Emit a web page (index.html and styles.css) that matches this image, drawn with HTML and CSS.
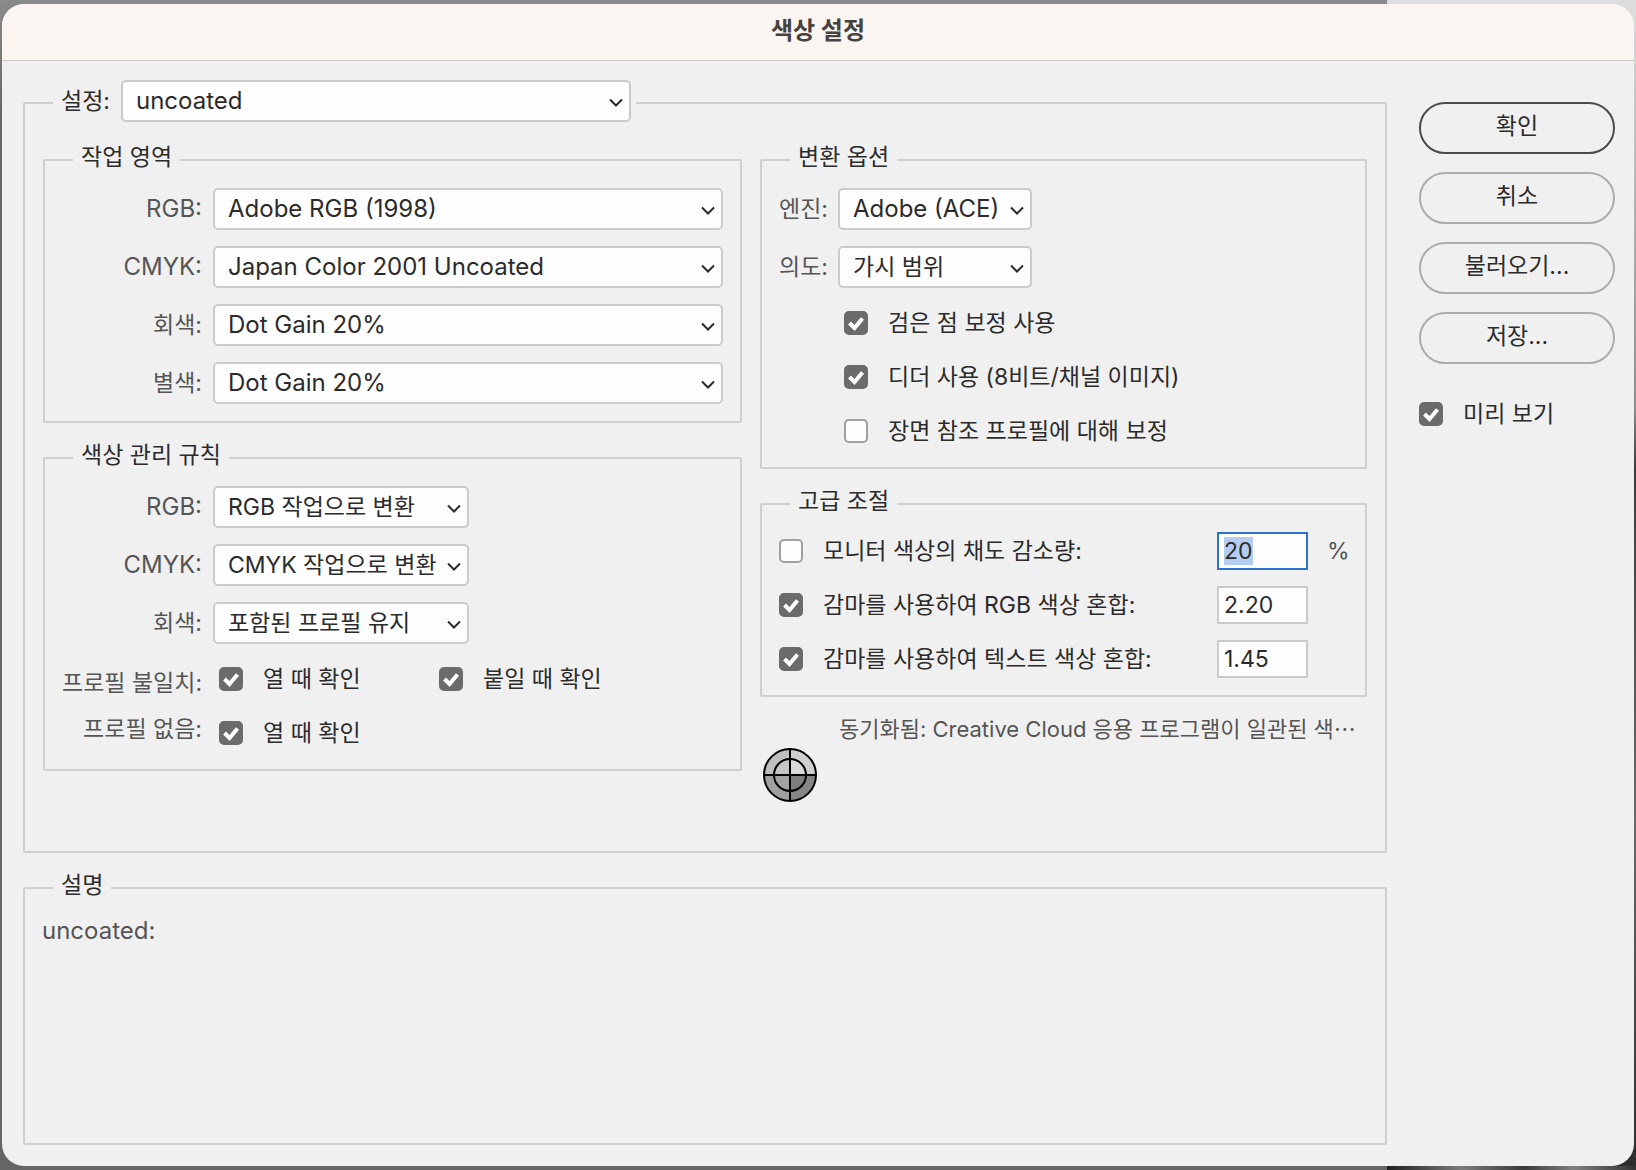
FILE: index.html
```html
<!DOCTYPE html>
<html lang="ko">
<head>
    <meta charset="UTF-8">
    <meta name="viewport" content="width=device-width, initial-scale=1.0">
    <title>색상 설정</title>
    <link rel="stylesheet" href="styles.css">
</head>
<body>

<form class="dialog" id="colorSettings">
    <header class="title-bar">
        <h1>색상 설정</h1>
    </header>

    <div class="content">
        <div class="main">
            <fieldset class="settings">
                <legend class="settings-legend">
                    <label for="preset">설정:</label>
                    <select id="preset" class="latin"><option>uncoated</option></select>
                </legend>

                <div class="columns">
                    <div class="column">
                        <fieldset class="group">
                            <legend>작업 영역</legend>
                            <div class="fields">
                                <label for="spaceRgb" class="latin">RGB:</label>
                                <select id="spaceRgb" class="latin"><option>Adobe RGB (1998)</option></select>
                                <label for="spaceCmyk" class="latin">CMYK:</label>
                                <select id="spaceCmyk" class="latin"><option>Japan Color 2001 Uncoated</option></select>
                                <label for="spaceGray">회색:</label>
                                <select id="spaceGray" class="latin"><option>Dot Gain 20%</option></select>
                                <label for="spaceSpot">별색:</label>
                                <select id="spaceSpot" class="latin"><option>Dot Gain 20%</option></select>
                            </div>
                        </fieldset>

                        <fieldset class="group">
                            <legend>색상 관리 규칙</legend>
                            <div class="fields policies">
                                <label for="policyRgb" class="latin">RGB:</label>
                                <select id="policyRgb"><option>RGB 작업으로 변환</option></select>
                                <label for="policyCmyk" class="latin">CMYK:</label>
                                <select id="policyCmyk"><option>CMYK 작업으로 변환</option></select>
                                <label for="policyGray">회색:</label>
                                <select id="policyGray"><option>포함된 프로필 유지</option></select>
                            </div>
                            <div class="fields profile-checks">
                                <span class="mismatch">프로필 불일치:</span>
                                <div class="check-row">
                                    <label class="check"><input type="checkbox" checked> 열 때 확인</label>
                                    <label class="check"><input type="checkbox" checked> 붙일 때 확인</label>
                                </div>
                                <span class="missing">프로필 없음:</span>
                                <div class="check-row">
                                    <label class="check"><input type="checkbox" checked> 열 때 확인</label>
                                </div>
                            </div>
                        </fieldset>
                    </div>

                    <div class="column">
                        <fieldset class="group">
                            <legend>변환 옵션</legend>
                            <div class="fields conversion">
                                <label for="engine">엔진:</label>
                                <select id="engine" class="latin"><option>Adobe (ACE)</option></select>
                                <label for="intent">의도:</label>
                                <select id="intent"><option>가시 범위</option></select>
                            </div>
                            <div class="check-list">
                                <label class="check"><input type="checkbox" checked> 검은 점 보정 사용</label>
                                <label class="check"><input type="checkbox" checked> 디더 사용 (8비트/채널 이미지)</label>
                                <label class="check"><input type="checkbox"> 장면 참조 프로필에 대해 보정</label>
                            </div>
                        </fieldset>

                        <fieldset class="group">
                            <legend>고급 조절</legend>
                            <div class="advanced">
                                <label class="check"><input type="checkbox"> 모니터 색상의 채도 감소량:</label>
                                <input type="text" id="desaturate" value="20" aria-label="채도 감소량">
                                <span class="unit">%</span>
                                <label class="check"><input type="checkbox" checked> 감마를 사용하여 RGB 색상 혼합:</label>
                                <input type="text" value="2.20" aria-label="RGB 감마">
                                <span></span>
                                <label class="check"><input type="checkbox" checked> 감마를 사용하여 텍스트 색상 혼합:</label>
                                <input type="text" value="1.45" aria-label="텍스트 감마">
                                <span></span>
                            </div>
                        </fieldset>

                        <div class="sync">
                            <svg class="sync-icon" viewBox="0 0 54 54" aria-hidden="true">
                                <path d="M27 27V1A26 26 0 0 0 1 27z" fill="#bfbfbf"/>
                                <path d="M27 27V1A26 26 0 0 1 53 27z" fill="#d0d0d0"/>
                                <path d="M27 27V53A26 26 0 0 1 1 27z" fill="#a0a0a0"/>
                                <path d="M27 27V53A26 26 0 0 0 53 27z" fill="#858585"/>
                                <path d="M27 27V11A16 16 0 0 0 11 27z" fill="#c6c6c6"/>
                                <path d="M27 27V11A16 16 0 0 1 43 27z" fill="#d9d9d9"/>
                                <path d="M27 27V43A16 16 0 0 1 11 27z" fill="#a3a3a3"/>
                                <path d="M27 27V43A16 16 0 0 0 43 27z" fill="#7e7e7e"/>
                                <g fill="none" stroke="#000" stroke-width="2">
                                    <circle cx="27" cy="27" r="26"/>
                                    <circle cx="27" cy="27" r="16"/>
                                    <path d="M27 1v52M1 27h52"/>
                                </g>
                            </svg>
                            <p>동기화됨: Creative Cloud 응용 프로그램이 일관된 색⋯</p>
                        </div>
                    </div>
                </div>
            </fieldset>

            <fieldset class="group description">
                <legend>설명</legend>
                <p class="latin">uncoated:</p>
            </fieldset>
        </div>

        <aside class="actions">
            <button type="submit" class="default">확인</button>
            <button type="button">취소</button>
            <button type="button">불러오기...</button>
            <button type="button">저장...</button>
            <label class="check"><input type="checkbox" checked> 미리 보기</label>
        </aside>
    </div>
</form>

<script>
    const desaturate = document.getElementById('desaturate');
    desaturate.focus();
    desaturate.select();

    document.getElementById('colorSettings').addEventListener('submit', function(event) {
        event.preventDefault();
    });
</script>

</body>
</html>
```

FILE: styles.css
```css
* {
    box-sizing: border-box;
}

body {
    margin: 0;
    padding: 4px 2px;
    min-height: 100vh;
    font-family: Inter, "Noto Sans CJK KR", sans-serif;
    font-size: 23px;
    line-height: 30px;
    color: #2b2b2b;
    background:
        linear-gradient(90deg, #1f1f1f, #7c7c7c 30%, #3a3a3a 55%, #808080 75%, #333) right bottom / 249px 4px no-repeat,
        linear-gradient(#dedede, #8a8a8a 35%, #3c3c3c 40%, #6b6b6b 70%, #2c2c2c) right top / 249px 100% no-repeat,
        linear-gradient(#8a8a8a, #666 10%, #666);
}

h1, p {
    margin: 0;
}

.dialog {
    display: flex;
    flex-direction: column;
    min-height: calc(100vh - 8px);
    border-radius: 22px;
    overflow: hidden;
    background-color: #f0f0f0;
}

.title-bar {
    height: 57px;
    padding-top: 12px;
    text-align: center;
    background-color: #faf5f1;
    border-bottom: 1px solid #cfcccb;
}

.title-bar h1 {
    font-size: 24px;
    line-height: 30px;
    font-weight: 700;
    color: #47423f;
}

.content {
    flex: 1;
    display: flex;
    gap: 32px;
    padding: 19px 19px 21px 21px;
}

.main {
    flex: 1;
    min-width: 0;
    display: flex;
    flex-direction: column;
    gap: 17px;
}

/* Groups */
fieldset {
    min-width: 0;
    margin: 0;
    border: 2px solid #cfcfcf;
    border-radius: 2px;
}

legend {
    padding: 0 8px 6px;
    margin-left: 11px;
}

.settings {
    padding: 16px 18px 49px;
}

.settings-legend {
    display: flex;
    align-items: center;
    gap: 11px;
    padding: 0 5px 4px 8px;
    margin-left: 10px;
}

.group {
    padding: 10px 17px 17px;
}

.columns {
    display: grid;
    grid-template-columns: minmax(0, 699fr) minmax(0, 607fr);
    gap: 18px;
}

.column {
    display: flex;
    flex-direction: column;
    gap: 17px;
}

.description {
    flex: 1;
    color: #555;
}

.description legend {
    color: #2b2b2b;
}

/* Fields */
.fields {
    display: grid;
    grid-template-columns: 140px 1fr;
    gap: 16px 11px;
    align-items: center;
    color: #555;
}

.fields > label, .fields > span {
    text-align: right;
    white-space: nowrap;
}

.policies {
    grid-template-columns: 140px 256px;
}

.conversion {
    grid-template-columns: 48px 194px;
}

select {
    appearance: none;
    width: 100%;
    height: 42px;
    padding: 0 28px 0 13px;
    font: inherit;
    color: #2b2b2b;
    border: 2px solid #cbcbcb;
    border-radius: 5px;
    background: #fdfdfd url("data:image/svg+xml,%3Csvg xmlns='http://www.w3.org/2000/svg' width='14' height='9' fill='none' stroke='%232b2b2b' stroke-width='2'%3E%3Cpath d='M1 1.5l6 6 6-6'/%3E%3C/svg%3E") right 6px top 16px no-repeat;
}

.settings-legend select {
    width: 510px;
}

/* Latin-only text runs a little larger than Hangul */
.latin {
    font-size: 24px;
}

.check {
    display: flex;
    align-items: center;
    gap: 20px;
    color: #2b2b2b;
    white-space: nowrap;
}

input[type="checkbox"] {
    appearance: none;
    flex: none;
    width: 24px;
    height: 24px;
    margin: 0;
    background-color: #fdfdfd;
    border: 2px solid #a0a0a0;
    border-radius: 5px;
}

input[type="checkbox"]:checked {
    border-color: #6b6b6b;
    background: #6b6b6b url("data:image/svg+xml,%3Csvg xmlns='http://www.w3.org/2000/svg' width='20' height='20' fill='none' stroke='%23fff' stroke-width='4'%3E%3Cpath d='M3.5 10l5 5 8-9.5'/%3E%3C/svg%3E") center no-repeat;
}

.profile-checks {
    margin-top: 16px;
}

.check-row {
    display: grid;
    grid-template-columns: 220px auto;
    padding-left: 6px;
}

.profile-checks .mismatch {
    padding-top: 8px;
}

.profile-checks .missing {
    padding-bottom: 8px;
}

.check-list {
    display: grid;
    gap: 24px;
    margin-top: 20px;
    padding: 0 0 4px 65px;
}

.advanced {
    display: grid;
    grid-template-columns: 1fr 91px 21px;
    gap: 16px 19px;
    align-items: center;
}

.unit {
    color: #555;
}

input[type="text"] {
    width: 100%;
    height: 38px;
    padding: 0 5px;
    font: inherit;
    color: #2b2b2b;
    background-color: #fdfdfd;
    border: 2px solid #cbcbcb;
    border-radius: 0;
    outline: none;
}

input[type="text"]:focus {
    border-color: #2a72cb;
}

input[type="text"]::selection {
    color: #2b2b2b;
    background-color: #b5cdf1;
}

/* Sync status */
.sync {
    display: flex;
    gap: 22px;
    padding-left: 3px;
    font-size: 22px;
    color: #555;
}

.sync-icon {
    flex: none;
    width: 54px;
    height: 54px;
    margin-top: 34px;
}

.sync p {
    white-space: nowrap;
}

/* Buttons on the right */
.actions {
    width: 196px;
    display: flex;
    flex-direction: column;
    gap: 18px;
    padding-top: 22px;
}

.actions button {
    height: 52px;
    padding: 0 0 4px;
    font: inherit;
    color: #2b2b2b;
    background: none;
    border: 2px solid #acacac;
    border-radius: 26px;
}

.actions .default {
    border-color: #4b4b4b;
}

.actions .check {
    margin-top: 17px;
}
```
